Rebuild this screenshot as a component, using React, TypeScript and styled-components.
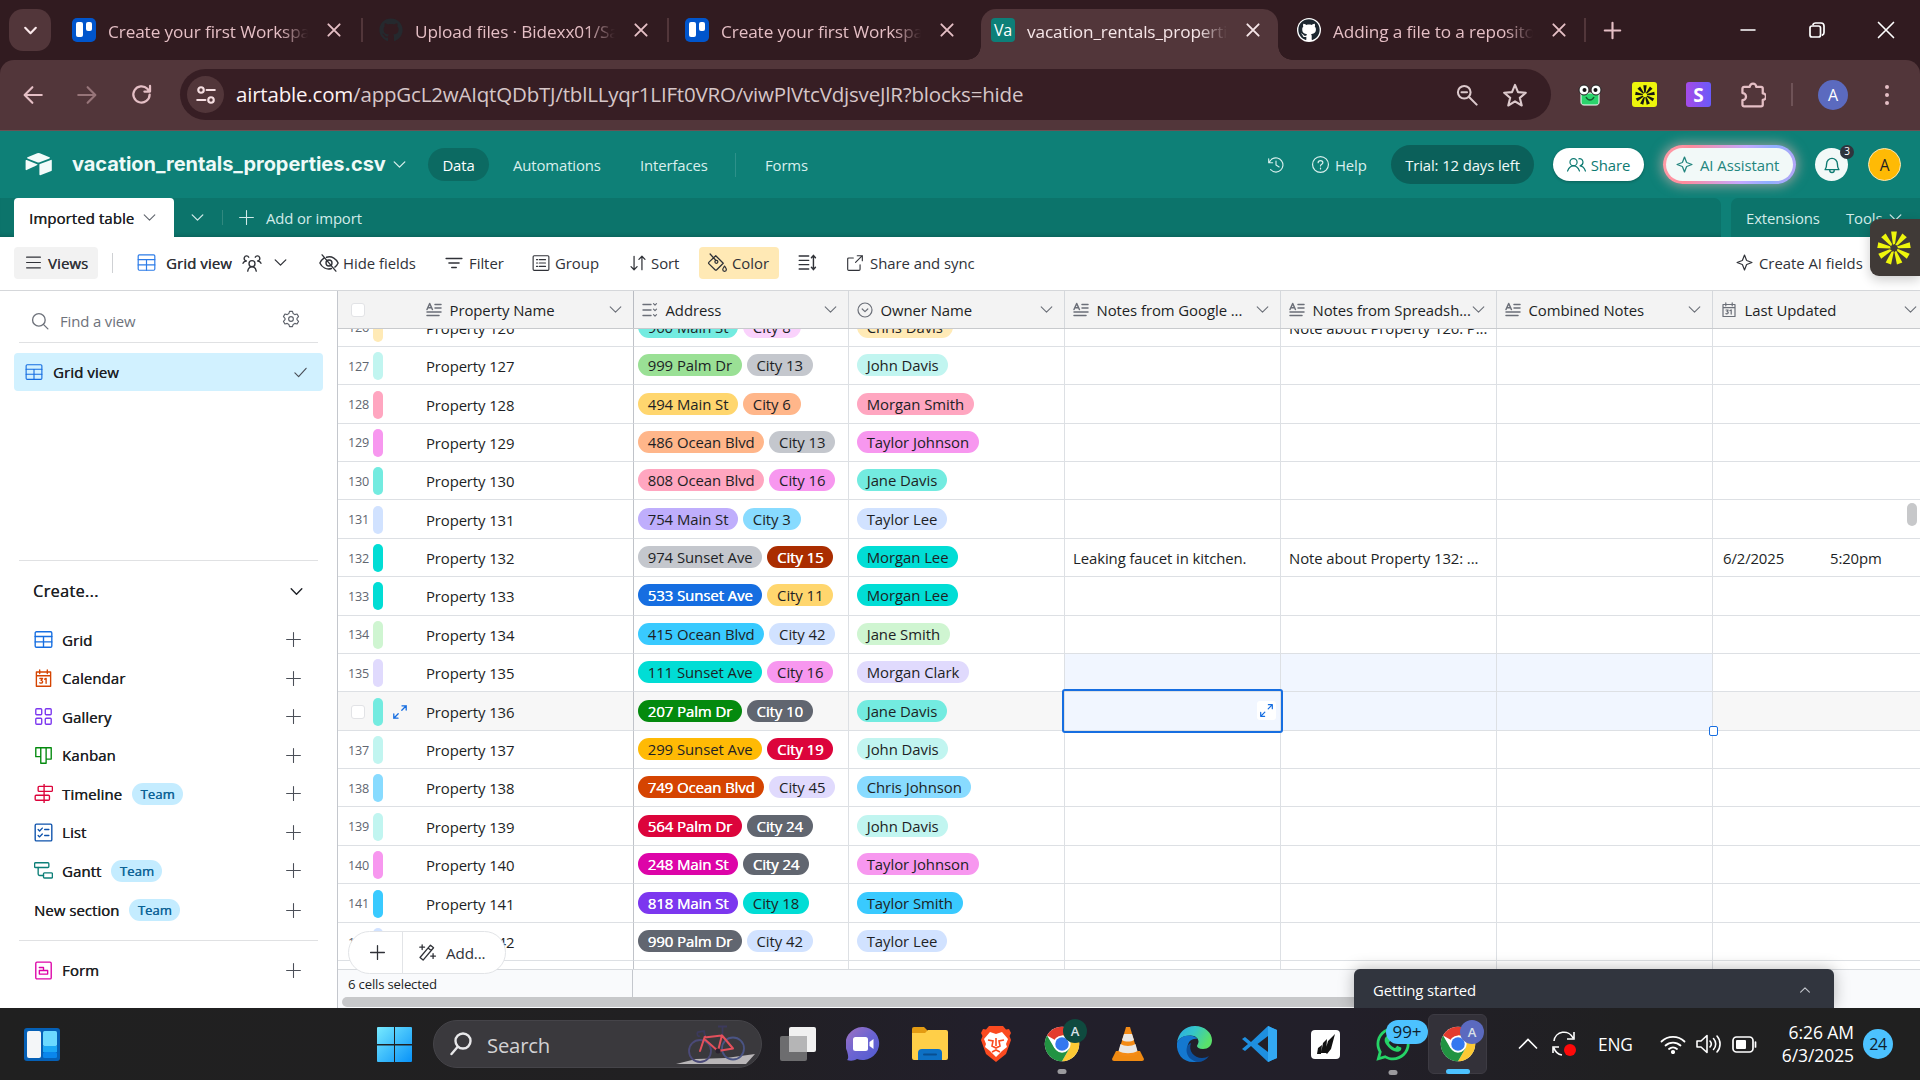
import React from 'react';
import styled, { createGlobalStyle, css } from 'styled-components';
import { FaGithub, FaWhatsapp } from 'react-icons/fa';

const Global = createGlobalStyle`
  * { box-sizing: border-box; }
  html, body { margin: 0; padding: 0; overflow: hidden; }
  body {
    width: 1920px; height: 1080px;
    font-family: "Open Sans", "Noto Sans", sans-serif;
    font-size: 14.9px; letter-spacing: -0.12px; color: #1d1f25; background: #fff;
  }
  svg { display: block; flex: none; }
`;

const medium = css`text-shadow: 0.35px 0 0 currentColor; letter-spacing: 0.12px;`;

/* ---------- icons ---------- */

const shapes: Record<string, React.ReactNode> = {
  down: <path d="M3 5.5l5 5 5-5" />,
  up: <path d="M3 10.5l5-5 5 5" />,
  plus: <path d="M8 1.5v13M1.5 8h13" />,
  close: <path d="M3 3l10 10M13 3L3 13" />,
  check: <path d="M2 8.5l4 4L14 3.5" />,
  menu: <path d="M1.5 3h13M1.5 8h13M1.5 13h13" />,
  grid: <><rect x="1" y="1.5" width="14" height="13" rx="1" /><path d="M1 5.5h14M1 10h14M8 5.5v9" /></>,
  people: <><circle cx="8" cy="8.5" r="2.4" /><path d="M4.6 14.5c.3-2 1.6-3.4 3.400-3.400s3.100 1.400 3.400 3.400M.8 8.200c.5-1.300 1.500-1.800 2.700-1.800-1.700-.4-2-1.800-1.600-2.800.6-1.600 2.800-1.700 3.500-.2M15.200 8.200c-.5-1.300-1.500-1.800-2.700-1.800 1.700-.4 2-1.800 1.600-2.800-.6-1.600-2.800-1.700-3.500-.2" /></>,
  hide: <><path d="M2.500 1.500l11 13M6 3.400C10.500 2 14 5 15.300 8c-.6 1.300-1.500 2.500-2.600 3.300M10 12.400C6 13.700 2.300 11.500.7 8c.7-1.500 1.700-2.800 3-3.700" /><circle cx="8" cy="8" r="2.400" /></>,
  filter: <path d="M1 4h14M3.500 8h9M6 12h4" strokeWidth="1.300" />,
  group: <><rect x="1" y="1.500" width="14" height="13" rx="1" /><path d="M6.500 5h5.500M6.500 8h5.500M6.500 11h5.500M4 5h1M4 8h1M4 11h1" /></>,
  sort: <path d="M4.500 2v12M1.800 11.200L4.500 14l2.700-2.800M11.500 14V2M8.800 4.800L11.500 2l2.700 2.800" />,
  color: <><path d="M7 2.200l6 6-5.200 5.200a1 1 0 01-1.400 0L1.600 8.700a1 1 0 010-1.400L7 2.200zM2.500 .8L7 5.800" /><circle cx="7.500" cy="7" r="1.200" /><path d="M14 10.500c1 1.400 1.500 2 1.500 2.700a1.400 1.400 0 01-2.900 0c0-.7.500-1.300 1.400-2.700z" /></>,
  height: <path d="M1 2.500h8M1 6.200h8M1 9.800h8M1 13.500h8M13 2v12M11.300 4L13 2l1.700 2M11.300 12L13 14l1.700-2" strokeWidth="1.200" />,
  share: <path d="M12.500 9.500v4a1 1 0 01-1 1h-9a1 1 0 01-1-1v-9a1 1 0 011-1h4M10 1.500h4.500V6M14.500 1.500L8.500 7.500" />,
  star4: <path d="M8 1l1.900 4.900a.4.400 0 00.2.2L15 8l-4.900 1.900a.4.400 0 00-.2.2L8 15l-1.900-4.900a.4.400 0 00-.2-.2L1 8l4.900-1.900a.4.400 0 00.2-.2z" />,
  search: <><circle cx="7" cy="7" r="5.600" /><path d="M11 11l4 4" /></>,
  gear: <><circle cx="8" cy="8" r="2.100" /><path d="M6.700 1.200h2.600l.6 2 1.500.9 2-.5 1.300 2.300L13.300 7.400v1.200l1.400 1.500-1.300 2.300-2-.5-1.500.9-.6 2H6.700l-.6-2-1.500-.9-2 .5-1.300-2.300L2.700 8.600V7.400L1.300 5.900l1.300-2.300 2 .5 1.500-.9z" /></>,
  calendar: <><path d="M2 2.500h12v12H2zM2 5.700h12M4.800 .8v3M11.200 .8v3" /><path d="M5 8h2.200L6 9.600c1.800 0 1.600 2.400-.3 2.300l-.8-.3M9 8.600l1.200-.7v4.200" /></>,
  gallery: <><rect x="1.500" y="1.500" width="5" height="5" rx=".8" /><rect x="9.500" y="1.500" width="5" height="5" rx=".8" /><rect x="1.500" y="9.500" width="5" height="5" rx=".8" /><rect x="9.500" y="9.500" width="5" height="5" rx=".8" /></>,
  kanban: <path d="M1.500 1.500h13v9.500H10.200M1.500 1.500V9h4.200M5.700 1.500v13h4.500v-13" />,
  timeline: <><path d="M8.500 0v16" /><rect x="3.500" y="2" width="12" height="4.200" rx=".8" /><rect x="1" y="9.500" width="12" height="4.200" rx=".8" /></>,
  list: <><rect x="1" y="1" width="14" height="14" rx="1" /><path d="M9 5.500h3.500M9 10.500h3.500M3.500 5.500l1.200 1.200L7 4.300M3.500 10.500l1.200 1.200L7 9.300" /></>,
  gantt: <><rect x=".5" y="1.500" width="12" height="4" rx=".8" /><rect x="8" y="10" width="7.500" height="4.300" rx=".8" /><path d="M3.500 5.500V11a1.200 1.200 0 001.200 1.200H8" /></>,
  form: <><rect x="1.500" y="1" width="13" height="14" rx="1" /><path d="M4.500 5.500h3.500v2.500h-3.500M4.500 8h7v3h-7z" /></>,
  history: <><path d="M8 4.500V8l2.800 1.700M1.500 2.500v3.500h3.500M1.900 6A6.300 6.300 0 118 14.300a6.300 6.300 0 01-4.800-2.300" /></>,
  help: <><circle cx="8" cy="8" r="6.700" /><path d="M6 6.500c0-2.400 4-2.400 4 0 0 1.300-2 1.300-2 2.700M8 11v.8" /></>,
  share2: <><circle cx="5.500" cy="6" r="3" /><path d="M.5 13.500c1-2.800 3-4.300 5-4.300s4 1.500 5 4.300M10 3.200c3.600-.8 5 4.500 1 5.900 2.200.2 3.600 1.700 4.500 4.400" /></>,
  bell: <path d="M3.700 7a4.300 4.300 0 018.600 0c0 2.600.7 4 1.200 4.700H2.500c.5-.7 1.200-2.100 1.200-4.700zM6.200 11.700v.5a1.800 1.800 0 003.600 0v-.5" />,
  text: <><path d="M1 7.500L3.700 1.500 6.400 7.500M2 5.700h3.400M9 2.500h6M9 6h6M1 10h14M1 13.500h12" strokeWidth="1.500" /></>,
  multi: <><path d="M1 2.500h8M1 8h8M1 13.500h8" strokeWidth="1.400" /><path d="M11.500 1.700l1.500 1.500 1.500-1.500M11.500 7.200l1.500 1.500 1.500-1.500M11.500 12.700l1.500 1.500 1.500-1.500" strokeWidth="1.200" /></>,
  single: <><circle cx="8" cy="8" r="7" strokeWidth="1.200" /><path d="M5.200 7L8 9.600 10.800 7" strokeWidth="1.200" /></>,
  expand: <><path d="M10 1.800h4.200V6M14.200 1.800L9.800 6.200M6 14.200H1.800V10M1.800 14.200l4.400-4.400" strokeWidth="1.300" /></>,
  wand: <><path d="M1.700 12.200L10.500 1.800l2.600 2.200L4.300 14.400zM8.500 4.200l2.600 2.200M3.500 1.500v4M1.500 3.500h4M12.700 9v4M10.700 11h4" /></>,
  back: <path d="M15 8H1.500M7.500 1.800L1.300 8l6.200 6.200" />,
  fwd: <path d="M1 8h13.500M8.500 1.800L14.700 8l-6.200 6.200" />,
  reload: <path d="M14.200 8a6.200 6.200 0 11-1.700-4.300L14.300 5.500M14.500 1.500v4.300h-4.300" />,
  site: <><circle cx="4" cy="4" r="2.200" /><path d="M8.500 4h6.500M1 12h6.500" /><circle cx="12" cy="12" r="2.200" /></>,
  star: <path d="M8 1.300l2 4.800 5.200.4-4 3.400 1.300 5.100L8 12.200 3.500 15l1.300-5.100-4-3.400L6 6.100z" />,
  zoomout: <><circle cx="6" cy="6" r="4.600" /><path d="M9.500 9.500l5.500 5.500M4 6h4" /></>,
  puzzle: <path d="M2.500 3h3.500a2 2 0 014 0h3a1 1 0 011 1v3a2 2 0 010 4v3a1 1 0 01-1 1h-10.500a1 1 0 01-1-1v-2.800a2.200 2.200 0 000-4.400V4a1 1 0 011-1z" />,
  min: <path d="M1 8h14" />,
  restore: <><rect x="1" y="4" width="10.500" height="11" rx="2" /><path d="M4 2.500C4.500 1.500 5.500 1 6.500 1H12a3 3 0 013 3v6.500c0 1-.5 2-1.500 2.500" /></>,
};

const Icon = ({ n, s = 19, c = 'currentColor', w = 1 }: { n: string; s?: number; c?: string; w?: number }) => (
  <svg width={s} height={s} viewBox="0 0 16 16" fill="none" stroke={c} strokeWidth={w} strokeLinecap="round" strokeLinejoin="round">
    {shapes[n]}
  </svg>
);

/* ---------- shared ---------- */

const Screen = styled.div`display: flex; flex-direction: column; width: 1920px; height: 1080px; overflow: hidden;`;
const Row = styled.div`display: flex; align-items: center;`;
const Slot = styled.span<{ $w?: number; $ml?: number; $c?: string; $up?: number }>`
  display: inline-flex; align-items: center; flex: none; white-space: nowrap;
  ${p => p.$w !== undefined && `width: ${p.$w}px;`}
  ${p => p.$ml !== undefined && `margin-left: ${p.$ml}px;`}
  ${p => p.$c && `color: ${p.$c};`}
  ${p => p.$up && `padding-bottom: ${p.$up}px;`}
`;

/* ---------- browser ---------- */

const TabStrip = styled(Row)`
  height: 60px; background: #311b20; color: #e5bfc5; font-size: 17.200px; letter-spacing: -0.110px;
`;
const TabSearch = styled.div`
  width: 42px; height: 42px; margin: 0 12px 0 9px; border-radius: 14px; background: #52363a;
  display: flex; align-items: center; justify-content: center; color: #fbe9eb; flex: none;
`;
const Tab = styled.div<{ $active?: boolean; $w: number; $line?: boolean }>`
  position: relative; height: 51px; align-self: flex-end; width: ${p => p.$w}px; padding: 0 0 9px 9px; flex: none;
  display: flex; align-items: center;
  ${p => p.$active && `
    padding-left: 10px; background: #52363a; border-radius: 15px 15px 0 0; color: #f6e6e8;
    &::before, &::after { content: ''; position: absolute; bottom: 0; width: 14px; height: 14px; }
    &::before { left: -14px; background: radial-gradient(circle at 0 0, transparent 13.500px, #52363a 14px); }
    &::after { right: -14px; background: radial-gradient(circle at 100% 0, transparent 13.500px, #52363a 14px); }
  `}
  ${p => p.$line && `&::after { content: ''; position: absolute; right: 2px; top: 9px; width: 2px; height: 24px; background: #52363a; }`}
`;
const TabTitle = styled.span`
  width: 201px; margin-left: 12px; padding-top: 3px; overflow: hidden; white-space: nowrap;
  mask-image: linear-gradient(90deg, #000 172px, transparent 200px);
`;
const TabClose = styled.span`margin-left: 16px;`;
const Trello = styled.div`
  width: 24px; height: 24px; border-radius: 5px; background: #0055cc; display: flex; gap: 3px; padding: 4px 4px; flex: none;
  i { width: 6.500px; height: 15px; border-radius: 2px; background: #fff; }
  i + i { height: 9px; }
`;
const GithubBadge = styled.span`
  width: 24px; height: 24px; margin-left: 10px; border-radius: 50%; background: #fff; color: #1c2730; flex: none;
  display: flex; align-items: center; justify-content: center;
`;
const VaIcon = styled.div`
  width: 24px; height: 24px; border-radius: 4px; background: #0d7f78; color: #fff; font-size: 16px; line-height: 24px; text-align: center; flex: none;
`;
const WinButtons = styled(Row)`margin-left: auto; color: #fff;`;
const WinButton = styled.span`width: 69px; display: flex; justify-content: center;`;
const NewTab = styled.div`margin-left: 15px;`;

const AddressRow = styled(Row)`
  height: 71px; background: #52363a; border-bottom: 1px solid #6a5154; border-radius: 14px 14px 0 0; color: #e5bfc5; padding: 0 0 1px 23px;
`;
const TopGap = styled.div`background: linear-gradient(#311b20 50%, #52363a 50%);`;
const Omnibox = styled(Row)`
  width: 1371px; height: 51px; margin-left: 28px; border-radius: 26px; background: #371e24; padding-left: 7px; color: #dcc9cc;
`;
const SiteBtn = styled.div`
  width: 37px; height: 37px; border-radius: 50%; background: #52363a; display: flex; align-items: center; justify-content: center; color: #f6dfe2; flex: none;
`;
const Url = styled.div`
  width: 1220px; margin-left: 12px; padding-bottom: 1px; font-size: 20.500px; letter-spacing: -0.190px; color: #d6c6c8; white-space: nowrap;
  b { font-weight: 400; color: #fdf3f4; }
`;
const Ext = styled.div<{ $bg: string; $ml: number }>`
  width: 25px; height: 25px; border-radius: 3px; margin-left: ${p => p.$ml}px; background: ${p => p.$bg};
  color: #fff; font-weight: 700; font-size: 19px; display: flex; align-items: center; justify-content: center;
`;
const ChromeLine = styled.div`width: 2px; height: 23px; margin-left: 25px; background: #6f5357;`;
const ProfileDot = styled.div`
  width: 30px; height: 30px; margin-left: 25px; border-radius: 50%; background: #5b6abf; color: #fff; font-size: 16px;
  display: flex; align-items: center; justify-content: center;
`;
const Dots = styled.div`
  display: grid; gap: 4px; margin-left: 37px;
  i { width: 4px; height: 4px; border-radius: 50%; background: #e5bfc5; }
`;

const Asterisk = ({ s, c }: { s: number; c: string }) => (
  <svg width={s} height={s} viewBox="-16 -16 32 32" fill={c}>
    {Array.from({ length: 9 }, (_, i) => (
      <path key={i} transform={`rotate(${i * 40})`} d="M-2.700 -15.500L2.700 -15.500L1 -4L-1 -3Z" />
    ))}
  </svg>
);

const CloseTab = () => <TabClose><Icon n="close" s={18} w={1.700} /></TabClose>;

const Browser = () => (
  <>
    <TabStrip>
      <TabSearch><Icon n="down" s={17} w={2} /></TabSearch>
      <Tab $w={302} $line>
        <Trello><i /><i /></Trello><TabTitle>Create your first Workspace</TabTitle><CloseTab />
      </Tab>
      <Tab $w={306} $line>
        <Slot $ml={5} $w={24} $c="#25292e"><FaGithub size={24} /></Slot><TabTitle>Upload files · Bidexx01/Sales</TabTitle><CloseTab />
      </Tab>
      <Tab $w={310}>
        <Slot $ml={5} $w={24}><Trello><i /><i /></Trello></Slot><TabTitle>Create your first Workspace</TabTitle><CloseTab />
      </Tab>
      <Tab $w={297} $active>
        <VaIcon>Va</VaIcon><TabTitle>vacation_rentals_properties</TabTitle><CloseTab />
      </Tab>
      <Tab $w={310} $line>
        <GithubBadge><FaGithub size={22} /></GithubBadge><TabTitle>Adding a file to a repository</TabTitle><CloseTab />
      </Tab>
      <NewTab><Icon n="plus" s={19} w={1.800} /></NewTab>
      <WinButtons>
        <WinButton><Icon n="min" s={16} w={1.500} /></WinButton>
        <WinButton><Icon n="restore" s={16} w={1.700} /></WinButton>
        <WinButton><Icon n="close" s={24} w={1.100} /></WinButton>
      </WinButtons>
    </TabStrip>
    <TopGap>
      <AddressRow>
        <Icon n="back" s={20} w={1.700} />
        <Slot $ml={34} $c="#977579"><Icon n="fwd" s={20} w={1.700} /></Slot>
        <Slot $ml={34}><Icon n="reload" s={21} w={1.700} /></Slot>
        <Omnibox>
          <SiteBtn><Icon n="site" s={20} w={1.700} /></SiteBtn>
          <Url><b>airtable.com</b>/appGcL2wAIqtQDbTJ/tblLLyqr1LIFt0VRO/viwPlVtcVdjsveJlR?blocks=hide</Url>
          <Icon n="zoomout" s={22} w={1.500} />
          <Slot $ml={25}><Icon n="star" s={24} w={1.400} /></Slot>
        </Omnibox>
        <Slot $ml={26}>
          <svg width="26" height="22" viewBox="0 0 26 22"><path d="M4 9h18v9c0 2-1 3-3 3H7c-2 0-3-1-3-3z" fill="#2bd46c" stroke="#fff" /><circle cx="7" cy="6" r="5" fill="#fff" stroke="#222" /><circle cx="19" cy="6" r="5" fill="#fff" stroke="#222" /><circle cx="7.500" cy="6" r="2" fill="#111" /><circle cx="18.500" cy="6" r="2" fill="#111" /><path d="M9 13c2 4 6 4 8 0" fill="none" stroke="#155c30" strokeWidth="1.500" /></svg>
        </Slot>
        <Ext $bg="#eef60c" $ml={29}><Asterisk s={20} c="#151515" /></Ext>
        <Ext $bg="linear-gradient(90deg,#a54be8,#6a5af9)" $ml={29}>S</Ext>
        <Slot $ml={29}><Icon n="puzzle" s={26} w={1.400} /></Slot>
        <ChromeLine /><ProfileDot>A</ProfileDot>
        <Dots><i /><i /><i /></Dots>
      </AddressRow>
    </TopGap>
  </>
);

/* ---------- airtable header ---------- */

const Header = styled(Row)`
  height: 67px; background: #0e8077; color: #d9efed; padding-left: 25px; font-size: 14.900px;
`;
const BaseTitle = styled.div`
  width: 313px; margin-left: 20px; padding-bottom: 2px; font-family: Inter, sans-serif; font-weight: 700; font-size: 20px; letter-spacing: -0.060px; color: #eefaf8; white-space: nowrap;
`;
const Pill = styled.div<{ $w: number; $h: number; $ml: number; $bg: string; $c: string; $shadow?: boolean }>`
  width: ${p => p.$w}px; height: ${p => p.$h}px; margin-left: ${p => p.$ml}px; background: ${p => p.$bg}; color: ${p => p.$c};
  border-radius: ${p => p.$h / 2}px; display: flex; align-items: center; justify-content: center; gap: 5px; white-space: nowrap; flex: none;
  ${p => p.$shadow && 'box-shadow: 0 1px 3px rgba(0,0,0,.25);'}
`;
const AiRing = styled.div`
  width: 133px; height: 39px; margin-left: 19px; border-radius: 20px; padding: 3px; flex: none;
  background: linear-gradient(100deg, #ff9ea8 0%, #ff8a9c 20%, #c3a8ff 60%, #8fb0ff 80%, #b9a4f5 100%);
  box-shadow: 0 0 12px 2px rgba(255,185,185,.55);
`;
const AiInner = styled(Row)`
  height: 33px; border-radius: 17px; background: #f2f9f8; color: #23857e; padding-left: 10px; gap: 7px; white-space: nowrap; letter-spacing: -0.050px;
`;
const Bell = styled.div`
  position: relative; width: 33px; height: 33px; margin-left: 19px; border-radius: 50%; background: #f2f9f8; color: #0e7a72;
  display: flex; align-items: center; justify-content: center;
`;
const Badge = styled.span`
  position: absolute; right: -6px; top: -3px; width: 14px; height: 14px; border-radius: 50%; background: #2f343d; color: #fff;
  font-size: 10px; line-height: 13px; text-align: center;
`;
const Avatar = styled.div`
  width: 33px; height: 33px; margin-left: 20px; border-radius: 50%; background: #ffba05; border: 1px solid #fbe7b5; color: #1d1f25; font-size: 15.500px;
  display: flex; align-items: center; justify-content: center;
`;
const VLine = styled.div<{ $ml: number; $h: number; $c: string }>`
  width: 1px; height: ${p => p.$h}px; margin-left: ${p => p.$ml}px; background: ${p => p.$c}; flex: none;
`;

const AirtableHeader = () => (
  <Header>
    <svg width="27" height="23" viewBox="0 0 27 23" fill="#f3fbfa">
      <path d="M12.200.3a3.500 3.500 0 012.600 0l9.700 3.900c.6.300.6 1 0 1.300l-9.800 3.800a3.500 3.500 0 01-2.500 0L2.500 5.500c-.6-.3-.6-1 0-1.300z" />
      <path d="M14.400 11.700v9.900c0 .5.500.8.900.6l11-4.200c.3-.1.500-.4.500-.7V7.500c0-.5-.5-.8-.9-.6l-11 4.200c-.3.100-.5.300-.5.600z" />
      <path d="M12.200 12.100l-3.300 1.600-.3.100-7 3.300c-.4.200-1-.1-1-.6V7.600c0-.2.100-.3.200-.4.300-.2.600-.2.900-.1l10.400 4.100c.5.200.6.700.1.900z" />
    </svg>
    <BaseTitle>vacation_rentals_properties.csv</BaseTitle>
    <Slot $ml={6}><Icon n="down" s={17} w={1.200} /></Slot>
    <Pill $w={61} $h={33} $ml={20} $bg="#0c6a62" $c="#fff">Data</Pill>
    <Slot $ml={24} $w={127}>Automations</Slot>
    <Slot $w={95}>Interfaces</Slot>
    <VLine $ml={0} $h={24} $c="#2d918a" />
    <Slot $ml={29} $w={502}>Forms</Slot>
    <Icon n="history" s={18} />
    <Slot $ml={26} $w={80}><Icon n="help" s={19} /><Slot $ml={5}>Help</Slot></Slot>
    <Pill $w={143} $h={39} $ml={0} $bg="#0b605a" $c="#f0faf9">Trial: 12 days left</Pill>
    <Pill $w={91} $h={33} $ml={19} $bg="#fff" $c="#0e7a72" $shadow><Icon n="share2" s={19} />Share</Pill>
    <AiRing><AiInner><Icon n="star4" s={17} w={1.200} />AI Assistant</AiInner></AiRing>
    <Bell><Icon n="bell" s={20} w={1.100} /><Badge>3</Badge></Bell>
    <Avatar>A</Avatar>
  </Header>
);

const TablesBar = styled.div`display: flex; justify-content: space-between; height: 39px; background: #0e8077; color: #d2ebe9;`;
const TablesLeft = styled(Row)`width: 1721px; padding-left: 14px; background: #0c746b; border-top-right-radius: 7px; box-shadow: inset 0 -4px 4px -3px rgba(0,0,0,.18);`;
const TablesRight = styled(Row)`width: 189px; padding-left: 15px; background: #0c746b; border-top-left-radius: 7px;`;
const TableTab = styled(Row)`width: 160px; height: 39px; padding-left: 15px; background: #fff; color: #1d1f25; border-radius: 4px 4px 0 0; ${medium}`;

const Tables = () => (
  <TablesBar>
    <TablesLeft>
      <TableTab><Slot $w={112}>Imported table</Slot><Slot $c="#60646d"><Icon n="down" s={17} /></Slot></TableTab>
      <Slot $ml={15}><Icon n="down" s={17} w={1.200} /></Slot>
      <VLine $ml={16} $h={15} $c="#31897f" />
      <Slot $ml={15}><Icon n="plus" s={17} /></Slot>
      <Slot $ml={11}>Add or import</Slot>
    </TablesLeft>
    <TablesRight><Slot $w={100}>Extensions</Slot><Slot $w={41}>Tools</Slot><Icon n="down" s={17} w={1.200} /></TablesRight>
  </TablesBar>
);

/* ---------- view toolbar ---------- */

const Toolbar = styled(Row)`position: relative; height: 53.500px; padding: 0 0 1px 14px; color: #303238; letter-spacing: -0.030px; border-bottom: 1px solid #d5d7da;`;
const Btn = styled(Row)<{ $w: number; $ml?: number; $gap?: number; $bg?: string; $pl?: number; $bold?: boolean }>`
  width: ${p => p.$w}px; height: 32px; margin-left: ${p => p.$ml ?? 0}px; gap: ${p => p.$gap ?? 6}px; padding-left: ${p => p.$pl ?? 0}px;
  background: ${p => p.$bg ?? 'transparent'}; border-radius: 4px; white-space: nowrap; flex: none;
  ${p => p.$bold && medium}
`;
const FloatWidget = styled.div`
  position: absolute; z-index: 5; right: 0; top: -18px; width: 50px; height: 57px; padding-left: 7px; border-radius: 9px 0 0 9px; background: #403a37;
  display: flex; align-items: center; box-shadow: 0 4px 12px rgba(0,0,0,.2);
`;

const ViewToolbar = () => (
  <Toolbar>
    <Btn $w={84} $bg="#f2f2f2" $pl={11} $gap={6} $bold><Icon n="menu" s={17} w={1.100} />Views</Btn>
    <VLine $ml={14} $h={20} $c="#cfd1d4" />
    <Btn $w={182} $ml={24} $gap={10} $bold>
      <Icon n="grid" s={19} c="#2d7ce8" />
      <Slot $w={66}>Grid view</Slot><Icon n="people" s={20} w={1.100} /><Icon n="down" s={17} w={1.200} />
    </Btn>
    <Btn $w={126} $gap={4}><Icon n="hide" s={20} w={1.100} />Hide fields</Btn>
    <Btn $w={87}><Icon n="filter" s={18} />Filter</Btn>
    <Btn $w={97} $gap={5}><Icon n="group" s={18} />Group</Btn>
    <Btn $w={70} $gap={4}><Icon n="sort" s={18} w={1.100} />Sort</Btn>
    <Btn $w={80} $bg="#ffe9b5" $pl={8} $gap={5}><Icon n="color" s={20} />Color</Btn>
    <Slot $ml={19}><Icon n="height" s={19} /></Slot>
    <Btn $w={890} $ml={29} $gap={6}><Icon n="share" s={18} />Share and sync</Btn>
    <Btn $w={140} $gap={6}><Icon n="star4" s={17} w={1.100} />Create AI fields</Btn>
    <FloatWidget><Asterisk s={34} c="#eef60c" /></FloatWidget>
  </Toolbar>
);

/* ---------- sidebar ---------- */

const Main = styled.div`display: flex; height: 717.500px;`;
const Side = styled.aside`width: 337px; flex: none; padding: 0 19px; background: #fff;`;
const Find = styled(Row)`height: 52.500px; padding: 9px 18px 0 12px; border-bottom: 1px solid #e0e1e3; color: #6e727b;`;
const Grow = styled.span`flex: 1;`;
const ActiveView = styled(Row)`height: 38px; margin: 10px -5px 168.500px; padding: 0 15px 0 11px; border-radius: 4px; background: #d1f1ff; ${medium}`;
const CreateHead = styled(Row)`height: 61px; border-top: 1px solid #e0e1e3; padding: 1px 13px 0 14px; font-size: 16.200px; ${medium} letter-spacing: 0.350px;`;
const CreateRow = styled(Row)<{ $flush?: boolean }>`
  height: 38.500px; padding: 0 16px 0 15px; gap: 9px;
  ${p => (p.$flush ? 'height: 40px; letter-spacing: 0.05px; text-shadow: 0.35px 0 0 currentColor;' : medium)}
`;
const Team = styled.span`
  width: 51px; height: 22px; margin-left: 1px; border-radius: 11px; background: #c4ecff; color: #0d6396; font-size: 13px; display: flex; align-items: center; justify-content: center;
`;
const SideRule = styled.div`height: 1px; margin: 10px 0 10px; background: #e0e1e3;`;

const creators: [string, string, string, boolean][] = [
  ['grid', '#166ee1', 'Grid', false], ['calendar', '#d54401', 'Calendar', false], ['gallery', '#7c37ef', 'Gallery', false],
  ['kanban', '#048a0e', 'Kanban', false], ['timeline', '#dc043b', 'Timeline', true], ['list', '#0d52ac', 'List', false], ['gantt', '#0d7f78', 'Gantt', true],
];

const Sidebar = () => (
  <Side>
    <Find><Icon n="search" s={18} w={1.200} /><Slot $ml={11}>Find a view</Slot><Grow /><Slot $up={4}><Icon n="gear" s={18} c="#5c6069" /></Slot></Find>
    <ActiveView><Icon n="grid" s={18} c="#166ee1" /><Slot $ml={10}>Grid view</Slot><Grow /><Icon n="check" s={15} c="#4a4e57" w={1.200} /></ActiveView>
    <CreateHead>Create...<Grow /><Icon n="down" s={17} w={1.300} /></CreateHead>
    {creators.map(([n, c, label, team]) => (
      <CreateRow key={label}><Icon n={n} s={19} c={c} w={1.150} />{label}{team && <Team>Team</Team>}<Grow /><Icon n="plus" s={17} c="#4b4f58" /></CreateRow>
    ))}
    <CreateRow $flush>New section<Team>Team</Team><Grow /><Icon n="plus" s={17} c="#4b4f58" /></CreateRow>
    <SideRule />
    <CreateRow><Icon n="form" s={19} c="#dd04a8" w={1.150} />Form<Grow /><Icon n="plus" s={17} c="#4b4f58" /></CreateRow>
  </Side>
);

/* ---------- grid ---------- */

const COLS = '296px 215px 216px 216px 216px 216px 216px';
const GridPane = styled.section`position: relative; flex: 1; min-width: 0; border-left: 1px solid #c4c7cd; display: flex; flex-direction: column; overflow: hidden;`;
const HeadRow = styled.div`display: grid; grid-template-columns: ${COLS}; height: 38.500px; background: #f3f3f3; border-bottom: 1px solid #c8cacd; flex: none;`;
const HeadCell = styled(Row)<{ $pl?: number; $strong?: boolean }>`
  padding: 1px 9px 0 ${p => p.$pl ?? 8}px; border-right: ${p => (p.$strong ? '1px solid #b9bcc2' : '1px solid #d5d8dc')};
  white-space: nowrap; color: #1d1f25; letter-spacing: -0.060px;
`;
const HeadLabel = styled.span`flex: 1; margin-left: 7.500px; min-width: 0;`;
const Box = styled.span`width: 14px; height: 14px; margin-left: 13px; border-radius: 3px; border: 1px solid #e2e3e6; background: #fff; flex: none;`;
const Body = styled.div`height: 639.500px; overflow: hidden; flex: none;`;
const Rows = styled.div`margin-top: -20.600px;`;
const GRow = styled.div<{ $hover?: boolean }>`
  display: grid; grid-template-columns: ${COLS}; height: 38.400px; background: ${p => (p.$hover ? '#f7f7f7' : '#fff')};
`;
const Cell = styled.div<{ $sel?: boolean; $strong?: boolean; $pl?: number }>`
  position: relative; display: flex; align-items: center; min-width: 0; padding-top: 1.300px; padding-left: ${p => p.$pl ?? 8}px; white-space: nowrap;
  border-bottom: 1px solid #dde0e4; border-right: 1px solid ${p => (p.$strong ? '#c0c3c9' : '#dde0e4')};
  ${p => p.$sel && 'background: #f1f6ff;'}
`;
const Num = styled.span`width: 35px; padding-left: 10px; font-size: 12.600px; letter-spacing: -0.250px; color: #616670;`;
const Bar = styled.span<{ $c: string }>`width: 10px; height: 28px; border-radius: 5px; background: ${p => p.$c}; flex: none;`;
const ExpandSlot = styled.span`width: 43px; padding-left: 9px; flex: none;`;
const Tags = styled.div`display: flex; gap: 5px; padding-bottom: 2px;`;
const Tag = styled.span<{ $c: string; $light?: boolean }>`
  height: 22px; padding: 0 9.700px; border-radius: 11px; background: ${p => p.$c}; line-height: 22px; letter-spacing: -0.050px;
  ${p => p.$light && 'color: #fff; text-shadow: 0.35px 0 0 #fff;'}
`;
const Note = styled.span`letter-spacing: -0.080px;`;
const Focus = styled.div`
  position: absolute; z-index: 2; left: -3px; top: -3px; right: -3px; bottom: -3px; border: 2.500px solid #166ee1; border-radius: 3px;
  display: flex; align-items: center; justify-content: flex-end; padding: 0 5px 2px 0; color: #166ee1;
`;
const ExpandBtn = styled.span`background: #fff; border-radius: 3px; padding: 2px;`;
const Handle = styled.i`position: absolute; z-index: 3; right: -6px; bottom: -6px; width: 9px; height: 10px; border: 1px solid #166ee1; border-radius: 2px; background: #fff;`;
const Summary = styled.div`
  height: 39.500px; border-top: 1px solid #d7dade; background: #f9fafc; font-size: 13.200px; letter-spacing: -0.200px; flex: none;
`;
const SummaryCell = styled.div`width: 295px; height: 27px; padding: 3px 0 0 10px; border-right: 1px solid #c4c7cd; line-height: 22px;`;
const HScroll = styled.div`height: 10px; margin-left: 4px; border-radius: 5px; background: #c7c8ca; width: 1400px;`;
const AddBar = styled.div`
  position: absolute; z-index: 4; left: 10px; bottom: 34px; width: 158px; height: 43px; border-radius: 22px; border: 1px solid #e2e4e7; background: #fff;
  display: flex; align-items: center; font-size: 15.200px; color: #303238;
`;
const AddPlus = styled.span`width: 54px; height: 41px; padding-left: 20px; border-right: 1px solid #e2e4e7; display: flex; align-items: center;`;
const VThumb = styled.div`position: absolute; right: 3px; top: 212px; width: 10px; height: 23px; border-radius: 5px; background: #c7c8ca;`;
const Getting = styled.div`
  position: absolute; z-index: 4; left: 1016px; bottom: 0; width: 480px; height: 39px; border-radius: 6px 6px 0 0; background: #31353e; color: #fff;
  display: flex; align-items: center; justify-content: space-between; padding: 3px 22px 0 19px; box-shadow: 0 0 16px rgba(0,0,0,.28); letter-spacing: -0.070px;
`;

type T = [string, string, boolean?];
const P = {
  teal: '#73ebe0', tealL: '#c1f5f0', pinkL: '#fad2fc', pink: '#f797ef', yelL: '#ffeab6', yel: '#ffd66e', gray: '#c4c7cd', grn: '#9ae095', grnL: '#cff5d1',
  org: '#ffb68a', red: '#ffa6c0', pur: '#bfaefc', purL: '#e0dafd', cy: '#88dbff', blL: '#d1e2ff', tq: '#01ddd5', cyB: '#39caff', dk: '#616670', redB: '#dc043b',
};
const rows: { n: number; a: T; b: T; o: [string, string] }[] = [
  { n: 126, a: ['960 Main St', P.teal], b: ['City 8', P.pinkL], o: ['Chris Davis', P.yelL] },
  { n: 127, a: ['999 Palm Dr', P.grn], b: ['City 13', P.gray], o: ['John Davis', P.tealL] },
  { n: 128, a: ['494 Main St', P.yel], b: ['City 6', P.org], o: ['Morgan Smith', P.red] },
  { n: 129, a: ['486 Ocean Blvd', P.org], b: ['City 13', P.gray], o: ['Taylor Johnson', P.pink] },
  { n: 130, a: ['808 Ocean Blvd', P.red], b: ['City 16', P.pink], o: ['Jane Davis', P.teal] },
  { n: 131, a: ['754 Main St', P.pur], b: ['City 3', P.cy], o: ['Taylor Lee', P.blL] },
  { n: 132, a: ['974 Sunset Ave', P.gray], b: ['City 15', '#aa2d00', true], o: ['Morgan Lee', P.tq] },
  { n: 133, a: ['533 Sunset Ave', '#166ee1', true], b: ['City 11', P.yel], o: ['Morgan Lee', P.tq] },
  { n: 134, a: ['415 Ocean Blvd', P.cyB], b: ['City 42', P.blL], o: ['Jane Smith', P.grnL] },
  { n: 135, a: ['111 Sunset Ave', P.tq], b: ['City 16', P.pink], o: ['Morgan Clark', P.purL] },
  { n: 136, a: ['207 Palm Dr', '#048a0e', true], b: ['City 10', P.dk, true], o: ['Jane Davis', P.teal] },
  { n: 137, a: ['299 Sunset Ave', '#ffba05'], b: ['City 19', P.redB, true], o: ['John Davis', P.tealL] },
  { n: 138, a: ['749 Ocean Blvd', '#d54401', true], b: ['City 45', P.purL], o: ['Chris Johnson', P.cy] },
  { n: 139, a: ['564 Palm Dr', P.redB, true], b: ['City 24', P.dk, true], o: ['John Davis', P.tealL] },
  { n: 140, a: ['248 Main St', '#dd04a8', true], b: ['City 24', P.dk, true], o: ['Taylor Johnson', P.pink] },
  { n: 141, a: ['818 Main St', '#7c37ef', true], b: ['City 18', P.tq], o: ['Taylor Smith', P.cyB] },
  { n: 142, a: ['990 Palm Dr', P.dk, true], b: ['City 42', P.blL], o: ['Taylor Lee', P.blL] },
];
const notes: Record<number, string[]> = {
  126: ['', 'Note about Property 126: P...', '', '', ''],
  132: ['Leaking faucet in kitchen.', 'Note about Property 132: ...', '', '6/2/2025', '5:20pm'],
};
const heads: [string, string][] = [
  ['multi', 'Address'], ['single', 'Owner Name'], ['text', 'Notes from Google ...'], ['text', 'Notes from Spreadsh...'], ['text', 'Combined Notes'], ['calendar', 'Last Updated'],
];

const GridView = () => (
  <GridPane>
    <HeadRow>
      <HeadCell $pl={0} $strong><Box /><Slot $ml={61} $c="#6b6f78"><Icon n="text" s={16} /></Slot><HeadLabel>Property Name</HeadLabel><Icon n="down" s={17} c="#6b6f78" /></HeadCell>
      {heads.map(([i, l]) => (
        <HeadCell key={l}><Slot $c="#6b6f78"><Icon n={i} s={16} w={1.200} /></Slot><HeadLabel>{l}</HeadLabel><Icon n="down" s={17} c="#6b6f78" /></HeadCell>
      ))}
    </HeadRow>
    <Body>
      <Rows>
        {rows.map(r => {
          const sel = r.n === 135 || r.n === 136;
          const hover = r.n === 136;
          const t = notes[r.n] ?? [];
          return (
            <GRow key={r.n} $hover={hover}>
              <Cell $pl={0} $strong>
                {hover ? <Slot $w={35}><Box /></Slot> : <Num>{r.n}</Num>}
                <Bar $c={r.o[1]} />
                <ExpandSlot>{hover && <Icon n="expand" s={16} c="#166ee1" />}</ExpandSlot>
                Property {r.n}
              </Cell>
              <Cell $pl={4}><Tags><Tag $c={r.a[1]} $light={r.a[2]}>{r.a[0]}</Tag><Tag $c={r.b[1]} $light={r.b[2]}>{r.b[0]}</Tag></Tags></Cell>
              <Cell><Tags><Tag $c={r.o[1]}>{r.o[0]}</Tag></Tags></Cell>
              <Cell $sel={sel}><Note>{t[0]}</Note>{hover && <Focus><ExpandBtn><Icon n="expand" s={15} /></ExpandBtn></Focus>}</Cell>
              <Cell $sel={sel}><Note>{t[1]}</Note></Cell>
              <Cell $sel={sel}>{hover && <Handle />}</Cell>
              <Cell $pl={10}><Slot $w={107}>{t[3]}</Slot><Slot>{t[4]}</Slot></Cell>
            </GRow>
          );
        })}
        <GRow><Cell $strong /><Cell /><Cell /><Cell /><Cell /><Cell /><Cell /></GRow>
      </Rows>
    </Body>
    <Summary><SummaryCell>6 cells selected</SummaryCell><HScroll /></Summary>
    <AddBar><AddPlus><Icon n="plus" s={17} w={1.200} /></AddPlus><Slot $ml={15}><Icon n="wand" s={19} w={1.100} /></Slot><Slot $ml={9}>Add...</Slot></AddBar>
    <VThumb />
    <Getting>Getting started<Icon n="up" s={14} c="#c4c7cd" w={1.300} /></Getting>
  </GridPane>
);

/* ---------- taskbar ---------- */

const Taskbar = styled(Row)`
  height: 72px; padding-left: 24px; color: #fff;
  background: linear-gradient(90deg, #202020 0%, #212022 35%, #221f2b 52%, #221f29 70%, #202021 85%, #202020 100%);
`;
const SearchBox = styled(Row)`
  width: 329px; height: 48px; margin-left: 21px; padding-left: 16px; border-radius: 24px; background: #3a393d; border: 1px solid #454449; font-size: 20.300px; letter-spacing: -0.200px; color: #d3d2d4; flex: none;
`;
const SearchText = styled.span`width: 189px; margin-left: 15px; padding-top: 2px;`;
const TaskApp = styled.div<{ $ml: number }>`position: relative; display: flex; flex: none; margin-left: ${p => p.$ml}px;`;
const ActiveTile = styled.div`
  position: relative; width: 59px; height: 60px; margin-left: 1px; border-radius: 6px; background: #333139; border: 1px solid #3d3b43; display: flex; align-items: center; justify-content: center; flex: none;
`;
const Mark = styled.i<{ $blue?: boolean }>`
  position: absolute; left: 50%; bottom: ${p => (p.$blue ? -1 : -12)}px; width: ${p => (p.$blue ? 24 : 9)}px; height: 5px; transform: translateX(-50%);
  border-radius: 3px; background: ${p => (p.$blue ? '#4cc2ff' : '#9b9a9e')};
`;
const MiniAvatar = styled.span<{ $bg: string; $r: number; $t: number }>`
  position: absolute; right: ${p => p.$r}px; top: ${p => p.$t}px; width: 24px; height: 24px; border-radius: 50%; background: ${p => p.$bg}; color: #d9e0e8;
  font-size: 13px; font-weight: 600; line-height: 24px; text-align: center;
`;
const Count = styled.span`
  position: absolute; right: -16px; top: -5px; width: 42px; height: 24px; border-radius: 12px; background: #4cc2ff; color: #10202c; font-size: 17px; line-height: 24px; text-align: center;
`;
const Lang = styled.span`width: 62px; font-size: 17.300px; letter-spacing: -0.200px;`;
const Clock = styled.div`width: 97px; text-align: right; font-size: 17.500px; line-height: 23px; letter-spacing: -0.080px;`;
const DayBadge = styled.div`width: 30px; height: 30px; margin-left: 9px; margin-top: -1px; border-radius: 50%; background: #4cc2ff; color: #10202c; font-size: 16px; line-height: 30px; text-align: center; letter-spacing: -0.300px;`;

const ChromeLogo = () => (
  <svg width="36" height="36" viewBox="0 0 48 48">
    <circle cx="24" cy="24" r="23" fill="#fff" />
    <path d="M24 24L4.100 12.500A23 23 0 0143.900 12.500H24z" fill="#e33b2e" />
    <path d="M43.900 12.500A23 23 0 0124 47l10-17.500L24 12.500z" fill="#fcc934" />
    <path d="M4.100 12.500A23 23 0 0024 47l10-17.500H14z" fill="#229342" />
    <circle cx="24" cy="24" r="11.500" fill="#fff" /><circle cx="24" cy="24" r="9" fill="#3478f0" />
  </svg>
);

const TaskbarView = () => (
  <Taskbar>
    <svg width="36" height="33" viewBox="0 0 36 33"><rect width="36" height="33" rx="3" fill="#0560b6" /><rect x="3" y="3" width="14" height="27" rx="2" fill="#f4f6f8" /><rect x="19" y="3" width="14" height="15" rx="1.500" fill="#6bd9ff" /><path d="M19 18h14v6H19z" fill="#1ba7f5" /><rect x="19" y="24" width="14" height="6" rx="1.500" fill="#0a86ec" /></svg>
    <TaskApp $ml={317}>
      <svg width="35" height="35" viewBox="0 0 35 35"><defs><linearGradient id="win" gradientUnits="userSpaceOnUse" x1="0" y1="0" x2="35" y2="35"><stop offset="0" stopColor="#77eaff" /><stop offset="1" stopColor="#0892f8" /></linearGradient></defs>
        <path fill="url(#win)" d="M1 0h16v17H0V1a1 1 0 011-1zM18 0h16a1 1 0 011 1v16H18zM0 18.500h17V35H1a1 1 0 01-1-1zM18 18.500h17V34a1 1 0 01-1 1H18z" /></svg>
    </TaskApp>
    <SearchBox>
      <svg width="22" height="24" viewBox="0 0 22 24" fill="none" stroke="#e8e8ea" strokeWidth="2.400" strokeLinecap="round"><circle cx="13" cy="9" r="7.500" /><path d="M7.500 15L1.500 22" /></svg>
      <SearchText>Search</SearchText>
      <svg width="80" height="40" viewBox="0 0 80 40" fill="none">
        <path d="M0 40L20 35 50 34 79 30 70 40z" fill="#b9b6b8" />
        <circle cx="24" cy="27" r="11" stroke="#4b4a78" strokeWidth="1.800" /><circle cx="57" cy="24.500" r="11" stroke="#4a5484" strokeWidth="1.800" />
        <path d="M24 27L29 12M28.500 13.500L45.500 11.500M46 11L42 27 29.500 16M46.500 12L57 24.500 42 27" stroke="#e4505c" strokeWidth="2" strokeLinejoin="round" strokeLinecap="round" />
        <path d="M46.500 10.500V3M42 2.500h9M29 12L28 7l-6 1c-2 2 0 5 2 4" stroke="#3c3a5c" strokeWidth="1.800" />
        <circle cx="42" cy="27" r="2.500" fill="#2a2230" />
      </svg>
    </SearchBox>
    <TaskApp $ml={18}>
      <svg width="36" height="34" viewBox="0 0 36 34"><rect x="9" y="0" width="27" height="25" rx="2" fill="#f1f1f1" /><rect x="0" y="9" width="27" height="25" rx="2" fill="#6d6d6f" /><path d="M9 9h18v16H9z" fill="#b5b5b6" /></svg>
    </TaskApp>
    <TaskApp $ml={30}>
      <svg width="34" height="34" viewBox="0 0 34 34"><defs><linearGradient id="chat" x1="0" y1="0" x2="1" y2="1"><stop offset="0" stopColor="#a072c0" /><stop offset=".5" stopColor="#6c64d2" /><stop offset="1" stopColor="#4f5bd0" /></linearGradient></defs><path d="M17 0a16.500 16.500 0 11-6 32c-3 2-7 2-10 1 2-2 1-5 0-9A17 17 0 0117 0z" fill="url(#chat)" /><rect x="7" y="10" width="15" height="14" rx="2.500" fill="#fff" /><path d="M23.500 15l4-3v10l-4-3z" fill="#fff" /></svg>
    </TaskApp>
    <TaskApp $ml={32}>
      <svg width="36" height="34" viewBox="0 0 36 34"><path d="M0 2a2 2 0 012-2h10l4 4v6H0z" fill="#e39b12" /><path d="M0 6h13l3-3h18a2 2 0 012 2v26a2 2 0 01-2 2H2a2 2 0 01-2-2z" fill="#ffcf48" /><path d="M6 33v-7a4 4 0 014-4h16a4 4 0 014 4v7z" fill="#0d70c4" /><path d="M12 27.500h12" stroke="#084f91" strokeWidth="2" strokeLinecap="round" /></svg>
    </TaskApp>
    <TaskApp $ml={30}>
      <svg width="36" height="36" viewBox="0 0 36 36"><path d="M11 0h14l3 3.500 3-.5 2 4-1.500 3L33 14l-5 14-10 8L8 28 3 14l1.500-4L3 7l2-4 3 .5z" fill="#fb4a20" /><path d="M18 8l6-2 6 7-2 5 1 3-5 4-6 6-6-6-5-4 1-3-2-5 6-7z" fill="#fff" /><path d="M18 12v8M10 14l5 1-1 5 4 2 4-2-1-5 5-1M14 26l4-2 4 2" fill="none" stroke="#fb4a20" strokeWidth="1.600" /></svg>
    </TaskApp>
    <TaskApp $ml={30}><ChromeLogo /><MiniAvatar $bg="#0f4a3f" $r={-7} $t={-7}>A</MiniAvatar><Mark /></TaskApp>
    <TaskApp $ml={32}>
      <svg width="32" height="36" viewBox="0 0 32 36"><path d="M4 25h24l4 8a2 2 0 01-2 2H2a2 2 0 01-2-2z" fill="#f08a12" /><path d="M14 1h4l8 27c-3 3-17 3-20 0z" fill="#f48b16" /><path d="M12 8h8l2 6c-3 2-9 2-12 0zM8.500 18c4 2.500 11 2.500 15 0l2 7c-5 3-14 3-19 0z" fill="#e9e7e5" /></svg>
    </TaskApp>
    <TaskApp $ml={32}>
      <svg width="36" height="36" viewBox="0 0 36 36"><defs><linearGradient id="e1" x1="0" y1="0" x2="1" y2=".4"><stop offset="0" stopColor="#2aa8e8" /><stop offset=".5" stopColor="#35c6c8" /><stop offset="1" stopColor="#5ae06a" /></linearGradient></defs>
        <path d="M1 17C2 7 9 0 19 0c10 0 17 7 17 14 0 6-4 9-9 9-4 0-6-1.500-6-3 0-1 1.500-2 1.500-4.500 0-3-3-6-8-6C7 9.500 2 13 1 17z" fill="url(#e1)" /><path d="M1 17c1-4 6-7.500 12-7.500 4 0 7 1.500 8.500 3.500-6-1-10 3-10 9 0 7 5 12 12 13.500C20 36 18 36 17 36 7 36 0 28 1 17z" fill="#1478d0" /><path d="M15 17c-3 8 3 15 11 15 3 0 5-1 7-2-3 4-7 6-11 6-7-1-11.500-6-11.500-12 0-3 1.500-6 4.500-7z" fill="#0c4f9c" /></svg>
    </TaskApp>
    <TaskApp $ml={30}>
      <svg width="36" height="36" viewBox="0 0 36 36"><path d="M26 0l9 4v28l-9 4L9 20l-6 5-3-2 6-5-6-5 3-2 6 5z" fill="#1e8fe0" /><path d="M26 10v16L15.500 18z" fill="#221f29" /><path d="M26 0l9 4v28l-9 4z" fill="#33a8f2" /></svg>
    </TaskApp>
    <TaskApp $ml={33}>
      <svg width="29" height="29" viewBox="0 0 29 29"><rect width="29" height="29" rx="4" fill="#fff" /><path d="M6 24l1-6 4-3-1 9zM10 23l2-10 4-4-1 14zM14 22l3-11 7-7-4 15-4 5z" fill="#111" /></svg>
    </TaskApp>
    <TaskApp $ml={34}><Slot $c="#25d366"><FaWhatsapp size={38} /></Slot><Count>99+</Count><Mark /></TaskApp>
    <Slot $w={15} />
    <ActiveTile><ChromeLogo /><MiniAvatar $bg="#5b6abf" $r={2} $t={5}>A</MiniAvatar><Mark $blue /></ActiveTile>
    <Slot $ml={31} $w={34}><svg width="20" height="12" viewBox="0 0 20 12" fill="none" stroke="#fff" strokeWidth="1.600"><path d="M1 10.500L10 1.500l9 9" /></svg></Slot>
    <Slot $w={46}>
      <svg width="25" height="26" viewBox="0 0 25 26" fill="none" stroke="#fff" strokeWidth="1.600"><path d="M2 10A10 10 0 0121 7M22 1v7h-7M1 22v-6h6M2 17a10 10 0 008 7" /><circle cx="18" cy="19" r="6" fill="#ff0a0a" stroke="none" /></svg>
    </Slot>
    <Lang>ENG</Lang>
    <Slot $w={36}><svg width="26" height="20" viewBox="0 0 26 20" fill="none" stroke="#fff" strokeWidth="1.800" strokeLinecap="round"><path d="M1.500 7.500a16.500 16.500 0 0123 0M5.500 11.500a11 11 0 0115 0M9 15a6 6 0 018 0" /><circle cx="13" cy="18" r="1.200" fill="#fff" /></svg></Slot>
    <Slot $w={36}><svg width="26" height="20" viewBox="0 0 26 20" fill="none" stroke="#fff" strokeWidth="1.600" strokeLinejoin="round" strokeLinecap="round"><path d="M1 7h4l6-5.500v17L5 13H1zM14 7a4.500 4.500 0 010 6M17.500 4.500a8 8 0 010 11M21 2a12 12 0 010 16" /></svg></Slot>
    <svg width="25" height="17" viewBox="0 0 25 17" fill="none" stroke="#fff" strokeWidth="1.700"><rect x="1" y="1" width="20" height="15" rx="3.500" /><rect x="4" y="4" width="10" height="9" rx="1" fill="#fff" stroke="none" /><path d="M23.500 6v5" strokeLinecap="round" /></svg>
    <Clock>6:26 AM<br />6/3/2025</Clock>
    <DayBadge>24</DayBadge>
  </Taskbar>
);

export default function App() {
  return (
    <Screen>
      <Global />
      <Browser />
      <AirtableHeader />
      <Tables />
      <ViewToolbar />
      <Main><Sidebar /><GridView /></Main>
      <TaskbarView />
    </Screen>
  );
}
